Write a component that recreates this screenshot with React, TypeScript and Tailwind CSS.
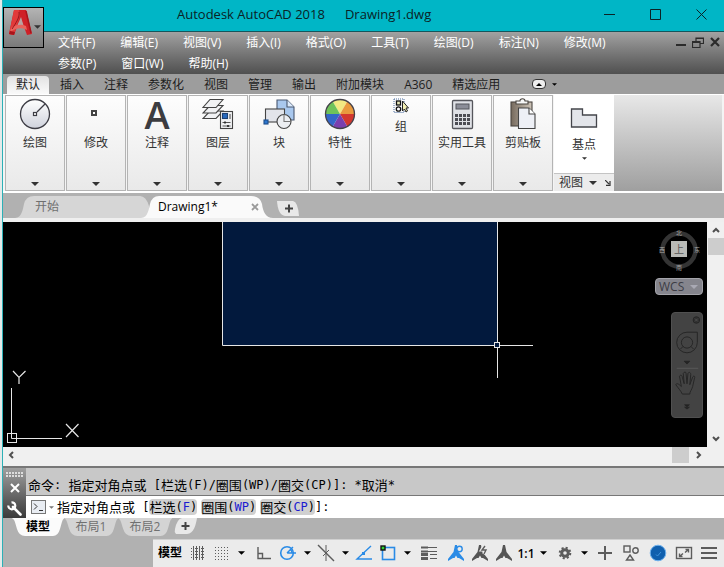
import React from "react";

type IconProps = { className?: string };

const MENUS_TOP = ["文件(F)", "编辑(E)", "视图(V)", "插入(I)", "格式(O)", "工具(T)", "绘图(D)", "标注(N)", "修改(M)"];
const MENUS_BOTTOM = ["参数(P)", "窗口(W)", "帮助(H)"];
const RIBBON_TABS = ["插入", "注释", "参数化", "视图", "管理", "输出", "附加模块", "A360", "精选应用"];

function Caret({ className = "h-1 w-2 text-[#3a3a3a]" }: IconProps) {
  return (
    <svg viewBox="0 0 8 4" className={className} fill="currentColor" aria-hidden="true">
      <path d="M0 0h8L4 4z" />
    </svg>
  );
}

function AppLogo() {
  return (
    <svg viewBox="0 0 26 28" className="h-7 w-[26px] shrink-0" aria-hidden="true">
      <path d="M6 1h12l6 24-5 1-3-8H9l-3 8-5-1z" fill="#cf2027" />
      <path d="M6 1h5l1 5L6 26l-5-1z" fill="#e23a3a" />
      <path d="M13 8l3 10-7-1z" fill="#b9a3a3" />
      <path d="M3 19c5-4 11-4 15-2l1 4c-6-3-11-2-17 2z" fill="#e8635c" />
      <path d="M11 3c1 5-3 11-7 17" fill="none" stroke="#96151b" />
      <path d="M18 2l5 22" fill="none" stroke="#a8141b" strokeWidth="1.500" />
      <path d="M1 25l5 1 1-3-5-1z" fill="#a8141b" />
    </svg>
  );
}

function DrawIcon() {
  return (
    <svg viewBox="0 0 32 32" className="size-8" fill="none" stroke="#3c3c44" aria-hidden="true">
      <defs>
        <linearGradient id="disc" x1="0" y1="0" x2="0" y2="1">
          <stop offset="0" stopColor="#fff" />
          <stop offset="1" stopColor="#cfd2dc" />
        </linearGradient>
      </defs>
      <circle cx="16" cy="16" r="14.500" fill="url(#disc)" strokeWidth="1.300" />
      <path d="M18 14l8-8" strokeWidth="1.300" />
      <rect x="14.500" y="14.500" width="3" height="3" fill="#fff" strokeWidth="1.200" />
    </svg>
  );
}

function ModifyIcon() {
  return (
    <svg viewBox="0 0 32 32" className="size-8" aria-hidden="true">
      <rect x="12" y="13" width="4" height="4" fill="#fff" stroke="#444" strokeWidth="2" />
    </svg>
  );
}

function AnnotateIcon() {
  return (
    <span className="block h-8 text-[38px] leading-8 font-semibold text-[#3c3c40]" aria-hidden="true">
      A
    </span>
  );
}

function LayersIcon() {
  return (
    <svg viewBox="0 0 32 32" className="size-8" fill="#f1f2f4" stroke="#444" strokeWidth="1.100" aria-hidden="true">
      <path d="M1 20.500h13l7-7.500H8z" />
      <path d="M1 15h13l7-7.500H8z" />
      <path d="M1 9.500h13l7-8H8z" />
      <rect x="18.500" y="13.500" width="12" height="17" />
      <rect x="20.500" y="15.500" width="5" height="5" fill="#2869bd" stroke="#1b3f73" />
      <path d="M28 16v5M20.500 24.500h8M20.500 28h8" stroke="#555" />
      <path d="M23 23.500v2M26 27v2" stroke="#222" strokeWidth="1.600" />
    </svg>
  );
}

function BlockIcon() {
  return (
    <svg viewBox="0 0 32 32" className="size-8" stroke="#4a5870" strokeWidth="1.100" aria-hidden="true">
      <path d="M14 2h10l7 7v13H14z" fill="#a9c8ee" />
      <path d="M24 2v7h7" fill="#dceafb" />
      <rect x="2.500" y="11" width="19" height="13" fill="#e2e4ea" stroke="#444" />
      <circle cx="21" cy="23.500" r="7" fill="#eceef2" stroke="#444" />
      <path d="M21 16.500v7h7" fill="none" stroke="#777" />
      <rect x="1" y="22" width="4" height="4" fill="#2d77cf" stroke="#1d4e8d" />
    </svg>
  );
}

function PropertiesIcon() {
  return (
    <svg viewBox="-16 -16 32 32" className="size-8" aria-hidden="true">
      <path d="M0 0L-7.250-12.560A14.500 14.500 0 0 1 7.250-12.560z" fill="#f2e982" />
      <path d="M0 0L7.250-12.560A14.500 14.500 0 0 1 14.500 0z" fill="#e99a3e" />
      <path d="M0 0H14.500A14.500 14.500 0 0 1 7.250 12.560z" fill="#d3382f" />
      <path d="M0 0L7.250 12.560A14.500 14.500 0 0 1-7.250 12.560z" fill="#7a3fae" />
      <path d="M0 0L-7.250 12.560A14.500 14.500 0 0 1-14.500 0z" fill="#3466c9" />
      <path d="M0 0H-14.500A14.500 14.500 0 0 1-7.250-12.560z" fill="#6fc25a" />
      <circle r="14.500" fill="none" stroke="#44424a" strokeWidth="1.300" />
    </svg>
  );
}

function GroupIcon() {
  return (
    <svg viewBox="0 0 16 16" className="size-4" fill="none" aria-hidden="true">
      <rect x="1" y="1" width="10" height="13.500" stroke="#4b6c9e" strokeDasharray="1 1" />
      <rect x="3.500" y="3" width="4" height="4" fill="#e8e8b8" stroke="#111" strokeWidth="1.300" />
      <circle cx="5.500" cy="11" r="2.200" fill="#fff" stroke="#111" strokeWidth="1.300" />
      <path d="M9.500 3v10l2-2 1.500 3 1.500-1-1.500-3h2.500z" fill="#f4f0b4" stroke="#222" />
    </svg>
  );
}

function CalculatorIcon() {
  return (
    <svg viewBox="0 0 32 32" className="size-8" aria-hidden="true">
      <rect x="6.500" y="2.500" width="20" height="28" rx="1" fill="#dfe1e6" stroke="#55565c" strokeWidth="1.300" />
      <rect x="10" y="6" width="13" height="5" fill="#8b8d98" stroke="#55565c" />
      {[16, 20, 24].map((y) =>
        [9, 13, 17, 21].map((x) => <rect key={`${x}-${y}`} x={x} y={y} width="3" height="3" fill="#4c4d54" />)
      )}
    </svg>
  );
}

function ClipboardIcon() {
  return (
    <svg viewBox="0 0 32 32" className="size-8" stroke="#4b4640" strokeWidth="1.100" aria-hidden="true">
      <defs>
        <linearGradient id="board" x1="0" y1="0" x2="1" y2="0">
          <stop offset="0" stopColor="#75695c" />
          <stop offset="1" stopColor="#cfc6ba" />
        </linearGradient>
      </defs>
      <rect x="4" y="4" width="21" height="24" fill="url(#board)" />
      <path d="M9 6V3h4c0-3 5-3 5 0h3v3z" fill="#f7f7f7" />
      <path d="M11.500 10H22l6 6v14.500H11.500z" fill="#eef0f6" stroke="#444" />
      <path d="M22 10v6h6" fill="#fff" stroke="#444" />
    </svg>
  );
}

function BaseIcon() {
  return (
    <svg viewBox="0 0 32 32" className="size-8" aria-hidden="true">
      <path d="M3.500 8h11v6h14v12h-25z" fill="#e3e5ea" stroke="#44454b" strokeWidth="1.300" />
    </svg>
  );
}

const PANELS: { label: string; icon: React.ReactNode }[] = [
  { label: "绘图", icon: <DrawIcon /> },
  { label: "修改", icon: <ModifyIcon /> },
  { label: "注释", icon: <AnnotateIcon /> },
  { label: "图层", icon: <LayersIcon /> },
  { label: "块", icon: <BlockIcon /> },
  { label: "特性", icon: <PropertiesIcon /> },
  { label: "组", icon: <GroupIcon /> },
  { label: "实用工具", icon: <CalculatorIcon /> },
  { label: "剪贴板", icon: <ClipboardIcon /> },
];

function TitleBar() {
  return (
    <header className="relative flex h-8 items-start border-b border-[#14565c] bg-[#00b6c6]">
      <button aria-label="应用程序菜单" className="absolute top-[7px] left-0 z-10 flex h-[41px] w-[41px] items-start border border-black bg-linear-to-b from-[#b4b4b4] to-[#7a7a7a] pt-px pl-1">
        <AppLogo />
        <Caret className="mt-4 h-1 w-[7px] shrink-0 text-[#333]" />
      </button>
      <h1 className="flex flex-1 gap-5 pt-1 pl-[174px] text-[13px] leading-5 whitespace-nowrap text-[#0b2225]">
        <span>Autodesk AutoCAD 2018</span>
        <span>Drawing1.dwg</span>
      </h1>
      <div className="flex text-[#0b2225]">
        <button aria-label="最小化" className="flex h-7 w-[46px] items-center justify-center">
          <svg viewBox="0 0 11 11" className="size-[11px]" fill="none" stroke="currentColor"><path d="M0 5.500h11" /></svg>
        </button>
        <button aria-label="最大化" className="flex h-7 w-[46px] items-center justify-center">
          <svg viewBox="0 0 11 11" className="size-[11px]" fill="none" stroke="currentColor"><path d="M.5.5h10v10H.5z" /></svg>
        </button>
        <button aria-label="关闭" className="flex h-7 w-[46px] items-center justify-center">
          <svg viewBox="0 0 11 11" className="size-[11px]" fill="none" stroke="currentColor"><path d="M.5.5l10 10M10.500.5l-10 10" /></svg>
        </button>
      </div>
    </header>
  );
}

function MenuBar() {
  return (
    <nav className="flex justify-between bg-linear-to-b from-[#a2a2a2] to-[#505050] pr-1 pl-[55px] text-white">
      <div>
        {[MENUS_TOP, MENUS_BOTTOM].map((row) => (
          <div key={row[0]} className="flex h-[21px] gap-[25px] leading-5">
            {row.map((m) => (
              <button key={m} className="whitespace-nowrap">{m}</button>
            ))}
          </div>
        ))}
      </div>
      <div className="flex h-5 items-center gap-1.5 text-[#2b2b2b]">
        <button aria-label="最小化图形">
          <svg viewBox="0 0 10 10" className="size-2.5" stroke="currentColor" strokeWidth="2"><path d="M0 8h10" /></svg>
        </button>
        <button aria-label="还原图形">
          <svg viewBox="0 0 12 11" className="h-[11px] w-3" fill="none" stroke="currentColor" strokeWidth="1.200">
            <path d="M4 4V1h7.500v5.500H8M.5 4.500H8v6H.5zM4 1.500h7.500M.5 5.500H8" />
          </svg>
        </button>
        <button aria-label="关闭图形">
          <svg viewBox="0 0 10 10" className="size-2.5" stroke="currentColor" strokeWidth="2.200"><path d="M1 1l8 8M9 1L1 9" /></svg>
        </button>
      </div>
    </nav>
  );
}

function Ribbon() {
  return (
    <section className="text-[#333]">
      <div className="flex h-5 items-end bg-[#9d9d9d] pl-1 text-[#1e1e1e]">
        <button className="h-[18px] rounded-t-sm bg-linear-to-b from-[#e2e2e2] to-[#fafafa] px-[9px] leading-[18px]">默认</button>
        <div className="flex gap-5 pl-[11px] leading-[18px]">
          {RIBBON_TABS.map((t) => (
            <button key={t} className="whitespace-nowrap">{t}</button>
          ))}
        </div>
        <button aria-label="最小化功能区" className="flex h-5 items-center gap-1.5 pl-8">
          <span className="flex h-2.5 w-3.5 shrink-0 items-center justify-center rounded-sm border border-[#333] bg-[#eee]">
            <svg viewBox="0 0 6 3" className="h-[3px] w-1.5"><path d="M0 3h6L3 0z" /></svg>
          </span>
          <Caret className="h-[3px] w-[5px] text-black" />
        </button>
      </div>
      <div className="flex h-[99px] border-t border-b-2 border-white bg-[#f4f4f4] pl-0.5">
        <div className="flex gap-px">
          {PANELS.map((p) => (
            <button key={p.label} className="flex w-[60px] flex-col items-center border border-[#b4b4b4] bg-linear-to-b from-[#fdfdfd] to-[#e9e9e9] pt-0.5">
              {p.icon}
              <span className="mt-[3px] leading-5 whitespace-nowrap">{p.label}</span>
              <Caret className="mt-auto mb-1 h-1 w-2 text-[#333]" />
            </button>
          ))}
          <div className="flex w-[60px] flex-col bg-white">
            <button className="flex flex-1 flex-col items-center pt-1.5">
              <BaseIcon />
              <span className="mt-0.5 leading-5">基点</span>
              <Caret className="mt-0.5 h-[3px] w-[5px] text-[#333]" />
            </button>
            <button className="flex h-[18px] items-center gap-1.5 border-t border-[#c4c4c4] bg-[#ececec] pl-[5px]">
              <span>视图</span>
              <Caret className="h-1 w-2 text-[#333]" />
              <svg viewBox="0 0 6 6" className="ml-0.5 size-1.5" fill="none" stroke="#333" strokeWidth="1.200"><path d="M0 0l4 4M5 1v4.400H1" /></svg>
            </button>
          </div>
        </div>
        <div className="mr-0.5 flex-1 bg-linear-to-b from-[#e8e8e8] to-[#9f9f9f]" />
      </div>
    </section>
  );
}

function DocumentTabs() {
  return (
    <div className="flex h-[29px] items-end border-b-4 border-[#efefef] bg-[#b1b1b1] pl-3">
      <button className="relative h-[22px] w-[134px] pl-5 text-left text-[#6f6f6f]">
        <svg viewBox="0 0 134 22" className="absolute inset-0 size-full" preserveAspectRatio="none">
          <path d="M0 22C7 22 8 12 9 8Q11 0 19 0H125Q131 0 134 10V22z" fill="#d6d6d6" />
        </svg>
        <span className="relative leading-[22px]">开始</span>
      </button>
      <div className="relative flex h-[22px] w-[124px] items-center justify-between pr-3.5 pl-[9px] text-black">
        <svg viewBox="0 0 124 22" className="absolute inset-0 size-full overflow-visible" preserveAspectRatio="none">
          <path d="M-8 22C-1 22 0 12 1 8Q3 0 10 0H102Q111 0 113 8C114 16 117 22 124 22z" fill="#fafafa" />
        </svg>
        <button className="relative">Drawing1*</button>
        <button aria-label="关闭 Drawing1" className="relative">
          <svg viewBox="0 0 8 8" className="size-2" stroke="#9a9a9a" strokeWidth="1.800"><path d="M1 1l6 6M7 1L1 7" /></svg>
        </button>
      </div>
      <button aria-label="新图形" className="relative mb-0.5 ml-1 flex h-[15px] w-[23px] items-center justify-center">
        <svg viewBox="0 0 23 15" className="absolute inset-0 size-full">
          <path d="M0 0H16Q21 1 22 15H8Q1 14 0 0z" fill="#e8e8e8" />
          <path d="M8 7.500h8M12 3.500v8" stroke="#444" strokeWidth="2" />
        </svg>
      </button>
    </div>
  );
}

function Canvas() {
  return (
    <main className="relative h-[225px] min-w-0 flex-1 overflow-hidden bg-black">
      <svg width="704" height="225" viewBox="0 0 704 225" className="absolute top-0 left-0" fill="none" stroke="#e6e6e6" role="img" aria-label="绘图区">
        <path d="M219.500 0V123.500H494.500V0" fill="#02193d" />
        <path d="M494.500 126v30M497 123.500h33" />
        <rect x="491.500" y="120.500" width="5" height="5" fill="#02193d" />
        <path d="M8.500 166v50.500H59" />
        <rect x="4.500" y="211.500" width="9" height="9" />
        <path d="M10 149l6 6.500 6.500-6.500M16 155.500v6.500M63 202l12.500 13M75.500 202L63 215" strokeWidth="1.200" />
      </svg>
      <div className="absolute top-1.5 right-1 flex w-12 flex-col items-center">
        <svg viewBox="0 0 44 44" className="h-11 w-11" aria-label="ViewCube">
          <circle cx="22" cy="22" r="16.500" fill="none" stroke="#343434" strokeWidth="4.500" />
          <rect x="14" y="13" width="16" height="16" fill="#b9bab6" />
          <g fill="#a8a8a8" fontSize="6" textAnchor="middle" className="font-['Noto_Sans_CJK_SC',sans-serif]">
            <text x="22" y="7">北</text>
            <text x="22" y="42">南</text>
            <text x="5" y="24">西</text>
            <text x="40" y="24">东</text>
            <text x="22" y="25" fontSize="10" fill="#555">上</text>
          </g>
        </svg>
        <button className="mt-1.5 flex h-[17px] w-12 items-center justify-between rounded border border-[#a4a4aa] bg-[#85858d] pr-1 pl-[3px] text-[12px] text-[#3c3c44]">
          WCS
          <Caret className="h-1 w-2 text-[#a9a9b4]" />
        </button>
      </div>
      <div className="absolute top-[90px] right-1 flex h-[106px] w-8 flex-col items-center rounded-sm border border-[#505050] bg-[#434343]">
        <svg viewBox="0 0 32 106" className="h-[104px] w-[30px]" fill="none" stroke="#242424" aria-hidden="true">
          <circle cx="26" cy="5" r="3.500" fill="#303030" />
          <path d="M24.500 3.500l3 3m0-3l-3 3" stroke="#555" strokeWidth=".8" />
          <path d="M16 18h11v11A11 11 0 1 1 16 18z" />
          <circle cx="16" cy="29" r="6" />
          <path d="M9 36l3-3M23 36l-3-3" />
          <path d="M13 49h6l-3 3zM13.500 95.500h5l-2.500 2zM13.500 98h5l-2.500 2z" fill="#242424" />
          <path d="M5 56.500h23" stroke="#5a5a5a" />
          <path d="M11 84c-2-4-4-6-7-10 1-2 3-1 6 2l-2-11c1-2 3-1 3 1l2 7-1-11c1-2 3-2 3 0l1 11 1-11c1-2 3-1 3 1l-1 11 3-8c1-2 3-1 2 1l-2 9c-1 4-3 5-3 8z" />
        </svg>
      </div>
    </main>
  );
}

function Chevron({ d, label }: { d: string; label: string }) {
  return (
    <button aria-label={label} className="flex size-4 items-center justify-center">
      <svg viewBox="0 0 8 8" className="size-2" fill="none" stroke="#505050" strokeWidth="2"><path d={d} /></svg>
    </button>
  );
}

function DrawingArea() {
  return (
    <section className="bg-[#f0f0f0]">
      <div className="flex">
        <Canvas />
        <div className="flex w-[17px] flex-col items-center justify-between">
          <div>
            <Chevron label="向上滚动" d="M1 6l3-3 3 3" />
            <div className="h-[17px] w-4 bg-[#cdcdcd]" />
          </div>
          <Chevron label="向下滚动" d="M1 2l3 3 3-3" />
        </div>
      </div>
      <div className="flex h-[19px] items-start justify-between pr-[17px]">
        <Chevron label="向左滚动" d="M6 1L3 4l3 3" />
        <div className="flex">
          <div className="mr-0.5 h-4 w-[17px] bg-[#cdcdcd]" />
          <Chevron label="向右滚动" d="M2 1l3 3-3 3" />
        </div>
      </div>
    </section>
  );
}

/* Latin runs are set in a monospaced face one size smaller than the Chinese ones. */
function Mono({ children }: { children: React.ReactNode }) {
  return <span className="font-['DejaVu_Sans_Mono',monospace] text-[12px] whitespace-pre">{children}</span>;
}

function Option({ name, hot }: { name: string; hot: string }) {
  return (
    <button className="flex h-4 items-center rounded-sm bg-[#d0d0d0] leading-4">
      {name}
      <Mono>(<span className="text-[#1a1ad0]">{hot}</span>)</Mono>
    </button>
  );
}

function CommandWindow() {
  return (
    <section className="flex h-[52px] border-t-2 border-[#777] text-[13px] text-black">
      <div className="flex w-[23px] flex-col items-center bg-linear-to-b from-[#a0a0a0] to-[#3b3b3b] pt-1">
        <svg viewBox="0 0 18 5" className="h-[5px] w-[18px]" stroke="#ddd" strokeWidth="2" strokeDasharray="2 1" aria-hidden="true">
          <path d="M0 1h18M0 4h18" />
        </svg>
        <button aria-label="关闭命令行" className="mt-1.5">
          <svg viewBox="0 0 10 10" className="size-2.5" stroke="#fff" strokeWidth="2"><path d="M1 1l8 8M9 1L1 9" /></svg>
        </button>
        <button aria-label="自定义" className="mt-2">
          <svg viewBox="0 0 15 15" className="size-[15px]" fill="none" aria-hidden="true">
            <path d="M6 6l7.500 7.500" stroke="#fff" strokeWidth="2.600" strokeLinecap="round" />
            <path d="M4.500 1.300A3.500 3.500 0 1 1 1.300 4.500" stroke="#fff" strokeWidth="2.200" />
          </svg>
        </button>
      </div>
      <div className="min-w-0 flex-1">
        <div className="flex h-7 items-end border-b border-[#777] bg-[#c8c8c8] pl-0.5 leading-5 whitespace-pre">
          命令<Mono>: </Mono>指定对角点或<Mono> [</Mono>栏选<Mono>(F)/</Mono>圈围<Mono>(WP)/</Mono>圈交<Mono>(CP)]: *</Mono>取消<Mono>*</Mono>
        </div>
        <label className="flex h-[22px] items-center bg-white pl-[5px]">
          <svg viewBox="0 0 15 14" className="h-3.5 w-[15px]" fill="none" stroke="#777" aria-hidden="true">
            <rect x=".5" y=".5" width="14" height="13" fill="#e9edf3" />
            <path d="M3 3.500l3 3-3 3M8 10.500h4" stroke="#333" />
          </svg>
          <Caret className="mx-[3px] h-[3px] w-[5px] text-[#777]" />
          <span className="whitespace-nowrap">指定对角点或</span>
          <Mono> [</Mono>
          <span className="flex gap-1">
            <Option name="栏选" hot="F" />
            <Option name="圈围" hot="WP" />
            <Option name="圈交" hot="CP" />
          </span>
          <Mono>]:</Mono>
          <input aria-label="命令" className="min-w-0 flex-1 outline-none" />
        </label>
      </div>
    </section>
  );
}

function LayoutTab({ name, active }: { name: string; active?: boolean }) {
  return (
    <button className={active ? "relative h-[18px] w-[52px] font-bold text-black" : "relative h-[18px] w-[54px] text-[#707070]"}>
      <svg viewBox="0 0 52 18" className="absolute inset-0 size-full" preserveAspectRatio="none" aria-hidden="true">
        <path d="M-2 0C3 0 3 5 5 11Q7 18 13 18H41Q46 18 48 11C50 5 50 0 54 0z" fill={active ? "#fbfbfb" : "#d4d4d4"} />
      </svg>
      <span className="relative leading-[18px]">{name}</span>
    </button>
  );
}

function Slot({ label, children, className = "w-6" }: { label: string; children: React.ReactNode; className?: string }) {
  return (
    <button aria-label={label} className={`flex h-[26px] shrink-0 items-center justify-center ${className}`}>
      {children}
    </button>
  );
}

function Drop({ label }: { label: string }) {
  return (
    <Slot label={label} className="w-3.5">
      <Caret className="h-1 w-[7px] text-black" />
    </Slot>
  );
}

function Glyph({ children, color = "#5c5c5c" }: { children: React.ReactNode; color?: string }) {
  return (
    <svg viewBox="0 0 16 16" className="size-4 overflow-visible" fill="none" stroke={color} strokeWidth="1.400" aria-hidden="true">
      {children}
    </svg>
  );
}

const BLUE = "#2a8be6";
const TRIPOD = "M7 0h2l1.500 7 5.500 7v2l-5-3H9.500L8 10.500 6.500 13H5l-5 3v-2l5.500-7z";

function StatusBar() {
  return (
    <footer className="flex h-7 bg-[#b1b1b1]">
      <div className="flex w-[150px] shrink-0" />
      <div className="flex min-w-0 flex-1 border-t border-[#d0d0d0] bg-[#ebebeb] pl-[5px] text-black">
        <div className="flex pr-1">
          <button className="w-7 pb-px text-left font-bold whitespace-nowrap">模型</button>
          <Slot label="栅格">
            <Glyph><path d="M3.500 1v14M6.500 1v14M9.500 1v14M12.500 1v14" strokeWidth="1" /><path d="M1 3.500h14M1 6.500h14M1 9.500h14M1 12.500h14" strokeWidth="1" strokeDasharray="1 1" /></Glyph>
          </Slot>
          <Slot label="捕捉">
            <Glyph><path d="M1 2.500h14M1 5.500h14M1 8.500h14M1 11.500h14M1 14.500h14" strokeWidth="1" strokeDasharray="1 2" /></Glyph>
          </Slot>
          <Drop label="捕捉选项" />
        </div>
        <div className="flex pr-[3px]">
          <Slot label="正交"><Glyph><path d="M2 2v11.500h13M2 8.500h4.500v5" /></Glyph></Slot>
          <Slot label="极轴追踪">
            <Glyph color={BLUE}><circle cx="7" cy="8" r="6.300" strokeWidth="1.600" /><path d="M7 8l6-6M7 8h9M12 8A5 5 0 0 0 10.500 4.500" /></Glyph>
          </Slot>
          <Drop label="极轴选项" />
          <Slot label="等轴测"><Glyph><path d="M0 0l16 16" /><path d="M8 0v16M5 11L11 5" strokeWidth="1" /></Glyph></Slot>
          <Drop label="等轴测选项" />
          <Slot label="对象捕捉追踪">
            <Glyph color={BLUE}><path d="M15 1L1 14h15" /><rect x="6" y="7" width="3" height="3" fill={BLUE} stroke="none" /></Glyph>
          </Slot>
          <Slot label="对象捕捉">
            <Glyph color={BLUE}><rect x="2.500" y="2.500" width="12" height="12" strokeWidth="1.600" /><rect x="1" y="1" width="4" height="4" fill="#2fd12f" stroke="#111" /></Glyph>
          </Slot>
          <Drop label="对象捕捉选项" />
        </div>
        <div className="flex gap-[3px]">
          <Slot label="线宽"><Glyph><path d="M0 2.500h16" strokeWidth="1" /><path d="M0 2.500h7" strokeWidth="2" /><path d="M0 6.500h16" strokeWidth="1" /><path d="M0 6.500h7" strokeWidth="2" /><path d="M0 9.500h7M0 13.500h7" strokeWidth="3" /><path d="M9 9.500h7M9 13.500h7" strokeWidth="1" /></Glyph></Slot>
          <div className="flex">
            <Slot label="注释可见性"><Glyph color={BLUE}><path d={TRIPOD} fill={BLUE} stroke="none" /><circle cx="11.500" cy="4" r="2.700" fill="#ebebeb" /></Glyph></Slot>
            <Slot label="自动缩放"><Glyph><path d={TRIPOD} fill="#555" stroke="none" /><path d="M12.500 0l-3 5h4l-2 4" stroke="#ebebeb" strokeWidth="3" /><path d="M13 1l-3 4h4l-2 4" /></Glyph></Slot>
            <Slot label="注释比例"><Glyph><path d={TRIPOD} fill="#555" stroke="none" /></Glyph></Slot>
            <button className="w-5 font-semibold">1:1</button>
            <Drop label="比例选项" />
          </div>
        </div>
        <div className="ml-auto flex pr-[3px]">
          <Slot label="切换工作空间">
            <Glyph><circle cx="8" cy="8" r="5.300" strokeWidth="2" strokeDasharray="2.100 2.060" /><circle cx="8" cy="8" r="3.300" strokeWidth="3" /></Glyph>
          </Slot>
          <Drop label="工作空间选项" />
          <Slot label="注释监视器" className="w-[27px]"><Glyph><path d="M8 1v14M1 8h14" strokeWidth="2" /></Glyph></Slot>
          <Slot label="隔离对象" className="w-[26px]"><Glyph><rect x="1" y="1" width="6" height="6" /><circle cx="12.500" cy="5.500" r="2.700" /><path d="M7 10l3.500 5h-7z" /></Glyph></Slot>
          <Slot label="硬件加速" className="w-[27px]"><Glyph color="#0f5fae"><circle cx="8" cy="8" r="7.800" fill="#0f5fae" stroke="#70b2ee" strokeWidth="1" /><path d="M6 9.500l1.500 1.500L11 7" stroke="#3f93dc" strokeWidth="1" /></Glyph></Slot>
          <Slot label="全屏显示" className="w-[26px]"><Glyph><rect x=".5" y="2.500" width="15" height="11" /><path d="M9 7.500l3.500-3M9.500 4.500h3v3M7 8.500l-3.500 3M3.500 8.500v3h3" /></Glyph></Slot>
          <Slot label="自定义状态栏"><Glyph><path d="M0 3h16M0 8h16M0 13h16" strokeWidth="2" /></Glyph></Slot>
        </div>
      </div>
    </footer>
  );
}

export default function App() {
  return (
    <div className="min-h-screen overflow-hidden bg-[#e4eaea] pl-0.5 font-['Open_Sans','Noto_Sans_CJK_SC',sans-serif] text-[12px] leading-4">
      <div className="border-l border-[#2cb0b6] bg-[#b1b1b1]">
        <TitleBar />
        <MenuBar />
        <Ribbon />
        <DocumentTabs />
        <DrawingArea />
        <CommandWindow />
        <div className="flex h-[21px] items-start pl-[9px]">
          <LayoutTab name="模型" active />
          <LayoutTab name="布局1" />
          <LayoutTab name="布局2" />
          <button aria-label="新建布局" className="ml-0.5">
            <svg viewBox="0 0 23 16" className="h-4 w-[23px]" aria-hidden="true">
              <path d="M8 0H23C22 6 20 16 13 16H2Q0 14 1 11Q3 1 8 0z" fill="#e8e8e8" />
              <path d="M7.500 8h8M11.500 4v8" stroke="#444" strokeWidth="2" />
            </svg>
          </button>
        </div>
        <StatusBar />
      </div>
    </div>
  );
}
